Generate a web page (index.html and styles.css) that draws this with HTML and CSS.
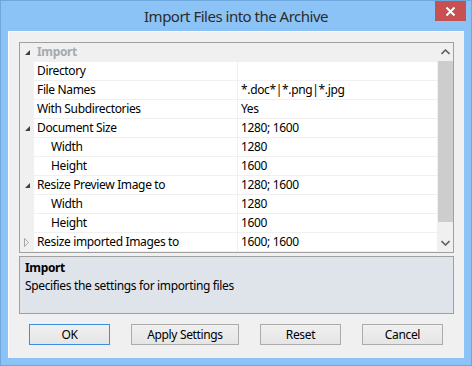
FILE: index.html
```html
<html>
    <head>
        <title>Import Files into the Archive</title>
        <link rel="stylesheet" href="styles.css">
    </head>
    <body>
        <div class="ventana">
            <div class="titulo">
                <span class="titulo-texto">Import Files into the Archive</span>
                <div class="cerrar">
                    <svg width="11" height="9" viewBox="0 0 11 9">
                        <path d="M1.5 0.5 L9.5 8.5 M9.5 0.5 L1.5 8.5" stroke="#fff" stroke-width="2"/>
                    </svg>
                </div>
            </div>
            <div class="cliente">
                <div class="grid">
                    <div class="filas">
                        <div class="fila categoria">
                            <div class="gutter"><span class="abierto"></span></div>
                            <div class="nombre">Import</div>
                        </div>
                        <div class="fila">
                            <div class="gutter"></div>
                            <div class="nombre">Directory</div>
                            <div class="valor"></div>
                        </div>
                        <div class="fila">
                            <div class="gutter"></div>
                            <div class="nombre">File Names</div>
                            <div class="valor">*.doc*|*.png|*.jpg</div>
                        </div>
                        <div class="fila">
                            <div class="gutter"></div>
                            <div class="nombre">With Subdirectories</div>
                            <div class="valor">Yes</div>
                        </div>
                        <div class="fila">
                            <div class="gutter"><span class="abierto"></span></div>
                            <div class="nombre">Document Size</div>
                            <div class="valor">1280; 1600</div>
                        </div>
                        <div class="fila">
                            <div class="gutter"></div>
                            <div class="nombre sub">Width</div>
                            <div class="valor">1280</div>
                        </div>
                        <div class="fila">
                            <div class="gutter"></div>
                            <div class="nombre sub">Height</div>
                            <div class="valor">1600</div>
                        </div>
                        <div class="fila">
                            <div class="gutter"><span class="abierto"></span></div>
                            <div class="nombre">Resize Preview Image to</div>
                            <div class="valor">1280; 1600</div>
                        </div>
                        <div class="fila">
                            <div class="gutter"></div>
                            <div class="nombre sub">Width</div>
                            <div class="valor">1280</div>
                        </div>
                        <div class="fila">
                            <div class="gutter"></div>
                            <div class="nombre sub">Height</div>
                            <div class="valor">1600</div>
                        </div>
                        <div class="fila">
                            <div class="gutter">
                                <svg width="6" height="9" viewBox="0 0 6 9">
                                    <path d="M0.5 0.5 L4.5 4.5 L0.5 8.5 Z" fill="none" stroke="#a6a6a6"/>
                                </svg>
                            </div>
                            <div class="nombre">Resize imported Images to</div>
                            <div class="valor">1600; 1600</div>
                        </div>
                    </div>
                    <div class="scroll">
                        <div class="flecha">
                            <svg width="9" height="6" viewBox="0 0 9 6">
                                <path d="M0.5 5 L4.5 1 L8.5 5" fill="none" stroke="#606060" stroke-width="1.6"/>
                            </svg>
                        </div>
                        <div class="pista">
                            <div class="thumb"></div>
                        </div>
                        <div class="flecha">
                            <svg width="9" height="6" viewBox="0 0 9 6">
                                <path d="M0.5 1 L4.5 5 L8.5 1" fill="none" stroke="#606060" stroke-width="1.6"/>
                            </svg>
                        </div>
                    </div>
                </div>
                <div class="descripcion">
                    <div class="desc-titulo">Import</div>
                    <div>Specifies the settings for importing files</div>
                </div>
                <div class="botones">
                    <button class="boton defecto">OK</button>
                    <button class="boton ancho">Apply Settings</button>
                    <button class="boton">Reset</button>
                    <button class="boton">Cancel</button>
                </div>
            </div>
        </div>
    </body>
</html>
```

FILE: styles.css
```css
body{
    margin: 0;
    font-family: "Noto Sans", "Liberation Sans", sans-serif;
    font-size: 12px;
    letter-spacing: -0.35px;
    color: #000;
}
.ventana{
    width: 472px;
    height: 366px;
    box-sizing: border-box;
    background-color: #8bc3f6;
    border: 1px solid #6ea7dd;
    display: flex;
    flex-direction: column;
}
.titulo{
    height: 30px;
    display: flex;
    justify-content: center;
    align-items: center;
    position: relative;
}
.titulo-texto{
    font-size: 15px;
    letter-spacing: -0.5px;
    color: #2b2b2b;
    margin-top: -1px;
}
.cerrar{
    position: absolute;
    top: 0;
    right: 5px;
    width: 31px;
    height: 20px;
    background-color: #c75050;
    display: flex;
    justify-content: center;
    align-items: center;
}
.cliente{
    flex: 1;
    margin: 0 7px 7px 7px;
    background-color: #f0f0f0;
    border-top: 1px solid #fbfbfb;
    border-left: 1px solid #fbfbfb;
    padding: 10px 10px 0 10px;
    display: flex;
    flex-direction: column;
}
.grid{
    height: 211px;
    box-sizing: border-box;
    border: 1px solid #a0a0a0;
    display: flex;
    background-color: #fff;
}
.filas{
    flex: 1;
    display: flex;
    flex-direction: column;
}
.fila{
    height: 19px;
    display: flex;
}
.gutter{
    width: 14px;
    background-color: #f0f0f0;
    display: flex;
    justify-content: center;
    align-items: center;
}
.abierto{
    width: 0;
    height: 0;
    border-left: 5px solid transparent;
    border-bottom: 5px solid #404040;
    margin-left: 1px;
}
.nombre{
    width: 200px;
    padding-left: 3px;
    line-height: 18px;
    border-bottom: 1px solid #f0f0f0;
    border-right: 1px solid #f0f0f0;
    white-space: nowrap;
}
.sub{
    padding-left: 17px;
    width: 186px;
}
.valor{
    flex: 1;
    padding-left: 3px;
    line-height: 18px;
    border-bottom: 1px solid #f0f0f0;
    white-space: nowrap;
}
.categoria{
    background-color: #f0f0f0;
}
.categoria .nombre{
    font-weight: bold;
    color: #a5a9b0;
    border: none;
    flex: 1;
}
.scroll{
    width: 16px;
    background-color: #f0f0f0;
    display: flex;
    flex-direction: column;
}
.flecha{
    height: 18px;
    display: flex;
    justify-content: center;
    align-items: center;
}
.pista{
    flex: 1;
}
.thumb{
    height: 161px;
    margin: 0 0 0 1px;
    background-color: #cdcdcd;
}
.descripcion{
    margin-top: 3px;
    height: 58px;
    box-sizing: border-box;
    border: 1px solid #a0a0a0;
    background-color: #dfe3ea;
    padding: 3px 5px;
    line-height: 16px;
}
.desc-titulo{
    font-weight: bold;
    margin-bottom: 2px;
}
.botones{
    display: flex;
    gap: 21px;
    margin-top: 10px;
    padding-left: 10px;
}
.boton{
    width: 81px;
    height: 21px;
    box-sizing: border-box;
    border: 1px solid #acacac;
    background: linear-gradient(#f0f0f0, #e5e5e5);
    font-family: "Noto Sans", "Liberation Sans", sans-serif;
    font-size: 12px;
    letter-spacing: -0.35px;
    color: #000;
    padding: 0;
}
.ancho{
    width: 108px;
}
.defecto{
    border-color: #3c8ee0;
}
```
